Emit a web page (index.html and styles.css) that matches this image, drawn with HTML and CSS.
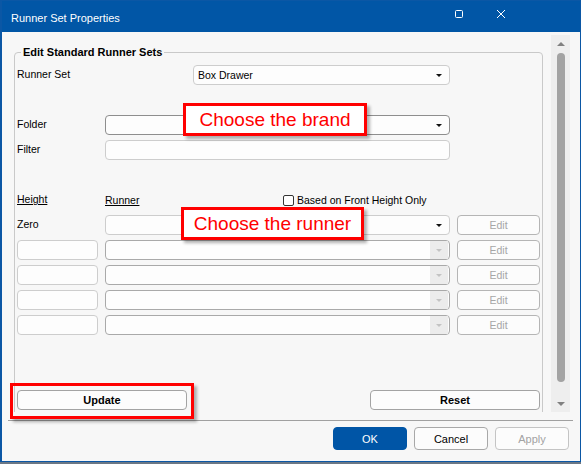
FILE: index.html
```html
<!DOCTYPE html>
<html lang="en">
<head>
    <meta charset="UTF-8">
    <title>Runner Set Properties</title>
    <link rel="stylesheet" href="styles.css">
</head>
<body>
<div class="window">
    <div class="titlebar">
        <span class="title">Runner Set Properties</span>
        <span class="tb-btn">
            <svg width="10" height="10" viewBox="0 0 10 10"><rect x="1.5" y="1.5" width="7" height="7" rx="1" fill="none" stroke="#fff" stroke-width="1"/></svg>
        </span>
        <span class="tb-btn">
            <svg width="10" height="10" viewBox="0 0 10 10"><path d="M1 1L9 9M9 1L1 9" stroke="#fff" stroke-width="1"/></svg>
        </span>
    </div>

    <div class="client">
        <div class="scroller">
            <div class="panel">
                <fieldset class="group">
                    <legend>Edit Standard Runner Sets</legend>

                    <div class="row first">
                        <span class="lbl">Runner Set</span>
                        <div class="combo set-combo"><span class="val">Box Drawer</span><span class="arrow"></span></div>
                    </div>

                    <div class="row gap30">
                        <span class="lbl">Folder</span>
                        <div class="combo dark"><span class="val"></span><span class="arrow"></span></div>
                    </div>
                    <div class="row">
                        <span class="lbl">Filter</span>
                        <div class="textbox"></div>
                    </div>

                    <div class="row gap30 header">
                        <span class="lbl u">Height</span>
                        <div class="hdr2">
                            <span class="lbl u runner-hdr">Runner</span>
                            <span class="check"></span>
                            <span class="lbl">Based on Front Height Only</span>
                        </div>
                    </div>

                    <div class="row">
                        <span class="lbl">Zero</span>
                        <div class="combo"><span class="val"></span><span class="arrow"></span></div>
                        <div class="btn edit">Edit</div>
                    </div>
                    <div class="row">
                        <div class="textbox"></div>
                        <div class="combo mid"><span class="val"></span><span class="arrow off"></span></div>
                        <div class="btn edit">Edit</div>
                    </div>
                    <div class="row">
                        <div class="textbox"></div>
                        <div class="combo mid"><span class="val"></span><span class="arrow off"></span></div>
                        <div class="btn edit">Edit</div>
                    </div>
                    <div class="row">
                        <div class="textbox"></div>
                        <div class="combo mid"><span class="val"></span><span class="arrow off"></span></div>
                        <div class="btn edit">Edit</div>
                    </div>
                    <div class="row">
                        <div class="textbox"></div>
                        <div class="combo mid"><span class="val"></span><span class="arrow off"></span></div>
                        <div class="btn edit">Edit</div>
                    </div>

                    <div class="actions">
                        <div class="btn bold wide">Update</div>
                        <div class="btn bold wide">Reset</div>
                    </div>
                </fieldset>
            </div>
            <div class="vscroll">
                <span class="sarrow up"></span>
                <span class="thumb"></span>
                <span class="sarrow down"></span>
            </div>
        </div>

        <div class="sep"></div>

        <div class="footer">
            <div class="btn foot ok">OK</div>
            <div class="btn foot">Cancel</div>
            <div class="btn foot off">Apply</div>
        </div>
    </div>

    <!-- annotations -->
    <div class="callout brand">Choose the brand</div>
    <div class="callout runner">Choose the runner</div>
    <div class="callout mark"></div>
</div>
</body>
</html>
```

FILE: styles.css
```css
*{
    margin: 0;
    padding: 0;
    box-sizing: border-box;
}
body{
    width: 581px;
    height: 464px;
    background-color: #6b7785;
    font-family: "Liberation Sans", Arial, sans-serif;
    font-size: 10.5px;
    color: #000;
    overflow: hidden;
}
.window{
    position: relative;
    width: 581px;
    height: 462px;
    border: 1px solid #0b57a5;
    border-left-width: 2px;
    background-color: #f7f7f7;
    display: flex;
    flex-direction: column;
}

/* title bar */
.titlebar{
    height: 31px;
    flex: none;
    background-color: #0156a6;
    color: #fff;
    display: flex;
    align-items: center;
    padding-left: 9px;
    padding-top: 2px;
}
.title{
    font-size: 11px;
    flex: 1;
}
.tb-btn{
    width: 42px;
    height: 20px;
    display: flex;
    align-items: center;
    justify-content: center;
    margin-top: -7px;
}
.tb-btn:last-child{
    margin-right: 58px;
}

/* client */
.client{
    flex: 1;
    display: flex;
    flex-direction: column;
}
.scroller{
    height: 380px;
    display: flex;
    overflow: hidden;
}
.panel{
    flex: 0 0 549px;
    padding-left: 12px;
}
.group{
    width: 529px;
    margin-top: 14px;
    border: 1px solid #c9c9c9;
    border-radius: 4px;
    padding: 0 0 40px 2px;
}
.group legend{
    font-weight: bold;
    font-size: 11px;
    line-height: 13px;
    margin-left: 4px;
    padding: 0 2px;
}

.row{
    display: grid;
    grid-template-columns: 81px 345px 83px;
    column-gap: 7px;
    height: 20px;
    margin-top: 5px;
    align-items: center;
}
.row.first{
    margin-top: 6px;
}
.row.gap30{
    margin-top: 30px;
}
.lbl{
    white-space: nowrap;
}
.row > .lbl{
    align-self: start;
    padding-top: 3px;
}
.u{
    text-decoration: underline;
}
.header > .lbl{
    padding-top: 3px;
}
.hdr2{
    grid-column: 2 / 4;
    display: flex;
    align-items: center;
}
.runner-hdr{
    width: 178px;
}
.check{
    width: 11px;
    height: 11px;
    border: 1px solid #333;
    border-radius: 2px;
    background-color: #fff;
    margin-right: 3px;
}

.combo, .textbox{
    height: 20px;
    background-color: #fdfdfd;
    border: 1px solid #cdcdcd;
    border-radius: 4px;
    display: flex;
    align-items: center;
}
.row > .textbox:nth-child(2){
    grid-column: 2;
}
.combo{
    grid-column: 2;
}
.combo.set-combo{
    margin-left: 88px;
}
.combo.dark{
    border-color: #8e8e8e;
}
.combo.mid{
    border-color: #a9a9a9;
}
.combo .val{
    flex: 1;
    padding-left: 4px;
}
.arrow{
    width: 18px;
    height: 18px;
    margin-right: 1px;
    display: flex;
    align-items: center;
    justify-content: center;
}
.arrow::after{
    content: "";
    border-left: 3px solid transparent;
    border-right: 3px solid transparent;
    border-top: 3px solid #111;
}
.arrow.off{
    background-color: #ececec;
}
.arrow.off::after{
    border-top-color: #c3c3c3;
}

.btn{
    height: 20px;
    border: 1px solid #a3a3a3;
    border-radius: 4px;
    background-color: #fcfcfc;
    display: flex;
    align-items: center;
    justify-content: center;
}
.btn.edit{
    border-color: #b5b5b5;
    color: #a6a6a6;
}
.btn.bold{
    font-weight: bold;
    font-size: 11px;
}
.actions{
    display: flex;
    justify-content: space-between;
    width: 523px;
    margin-top: 55px;
}
.btn.wide{
    width: 170px;
}

/* scrollbar */
.vscroll{
    flex: 0 0 19px;
    margin-top: 3px;
    background-color: #eeeeee;
    display: flex;
    flex-direction: column;
    align-items: center;
}
.sarrow{
    height: 17px;
    flex: none;
    display: flex;
    align-items: center;
}
.sarrow.up::after{
    content: "";
    border-left: 4px solid transparent;
    border-right: 4px solid transparent;
    border-bottom: 4px solid #808080;
}
.sarrow.down::after{
    content: "";
    border-left: 4px solid transparent;
    border-right: 4px solid transparent;
    border-top: 4px solid #808080;
}
.thumb{
    width: 8px;
    height: 329px;
    border-radius: 4px;
    background-color: #a3a3a3;
    margin-top: 1px;
    margin-bottom: 13px;
}

/* footer */
.sep{
    height: 1px;
    background-color: #a0a0a0;
    margin: 8px 7px 0 6px;
}
.footer{
    display: flex;
    justify-content: flex-end;
    gap: 7px;
    padding-right: 11px;
    margin-top: 6px;
}
.btn.foot{
    width: 74px;
    height: 23px;
    font-size: 11px;
    border-color: #a8a8a8;
}
.btn.ok{
    background-color: #0055a6;
    border-color: #0055a6;
    color: #fff;
}
.btn.off{
    color: #a3a3a3;
    border-color: #c4c4c4;
}

/* red annotation boxes */
.callout{
    position: absolute;
    border: 3px solid #ff0000;
    box-shadow: 3px 3px 3px rgba(0, 0, 0, 0.3);
    color: #ff0000;
    font-size: 19px;
    display: flex;
    align-items: center;
    justify-content: center;
    background-color: #fff;
}
.callout.brand{
    left: 181px;
    top: 102px;
    width: 184px;
    height: 33px;
}
.callout.runner{
    left: 179px;
    top: 206px;
    width: 183px;
    height: 33px;
}
.callout.mark{
    left: 8px;
    top: 382px;
    width: 184px;
    height: 36px;
    background-color: transparent;
}
```
